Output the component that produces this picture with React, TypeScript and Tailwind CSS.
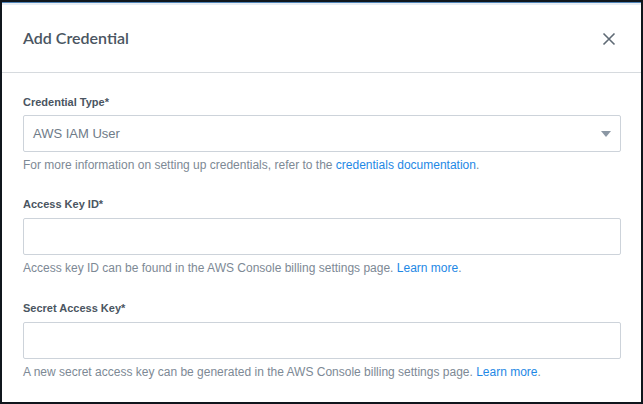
const fields = [
	{
		label: "Access Key ID*",
		help: "Access key ID can be found in the AWS Console billing settings page.",
	},
	{
		label: "Secret Access Key*",
		help: "A new secret access key can be generated in the AWS Console billing settings page.",
	},
];

export default function App() {
	return (
		<div className="w-[643px] h-[404px] bg-[#10161d] p-[2px] overflow-hidden font-['Liberation_Sans',Arial,sans-serif]">
			<div className="h-full bg-white overflow-hidden">
				<div className="h-px bg-[#4f83b8]" />
				<div className="h-[2px] bg-[#e8edf3]" />
				<div className="h-[68px] flex items-center justify-between pl-[21px] pr-[20px] border-b border-[#d6dade]">
					<h2 className="font-['Lato',sans-serif] font-semibold text-[16px] text-[#4a5561] mt-[-2px]">
						Add Credential
					</h2>
					<button className="w-6 h-6 flex items-center justify-center text-[#5f6a75]">
						<svg width="14" height="14" viewBox="0 0 14 14">
							<path
								d="M1.5 1.5 L12.5 12.5 M12.5 1.5 L1.5 12.5"
								stroke="currentColor"
								strokeWidth="1.6"
								fill="none"
							/>
						</svg>
					</button>
				</div>
				<div className="pl-[21px] pr-[20px] pt-[22px]">
					<div className="mb-[24px]">
						<label className="block text-[11px] leading-[14px] font-bold text-[#4a5561] mb-[6px]">
							Credential Type*
						</label>
						<div className="h-[37px] border border-[#cdd3da] rounded-[2px] flex items-center justify-between pl-[9px] pr-[9px]">
							<span className="text-[13px] text-[#6f7b88]">AWS IAM User</span>
							<svg width="10" height="6" viewBox="0 0 10 6">
								<path d="M0 0 H10 L5 6 Z" fill="#8b97a4" />
							</svg>
						</div>
						<p className="mt-[5px] text-[12px] leading-[16px] text-[#7d8995]">
							For more information on setting up credentials, refer to the{" "}
							<a className="text-[#1e88e5]">credentials documentation</a>.
						</p>
					</div>
					{fields.map((f) => (
						<div key={f.label} className="mb-[25px]">
							<label className="block text-[11px] leading-[14px] font-bold text-[#4a5561] mb-[7px]">
								{f.label}
							</label>
							<input className="block w-full h-[37px] border border-[#cdd3da] rounded-[2px] outline-none" />
							<p className="mt-[5px] text-[12px] leading-[16px] text-[#7d8995]">
								{f.help} <a className="text-[#1e88e5]">Learn more</a>.
							</p>
						</div>
					))}
				</div>
			</div>
		</div>
	);
}
